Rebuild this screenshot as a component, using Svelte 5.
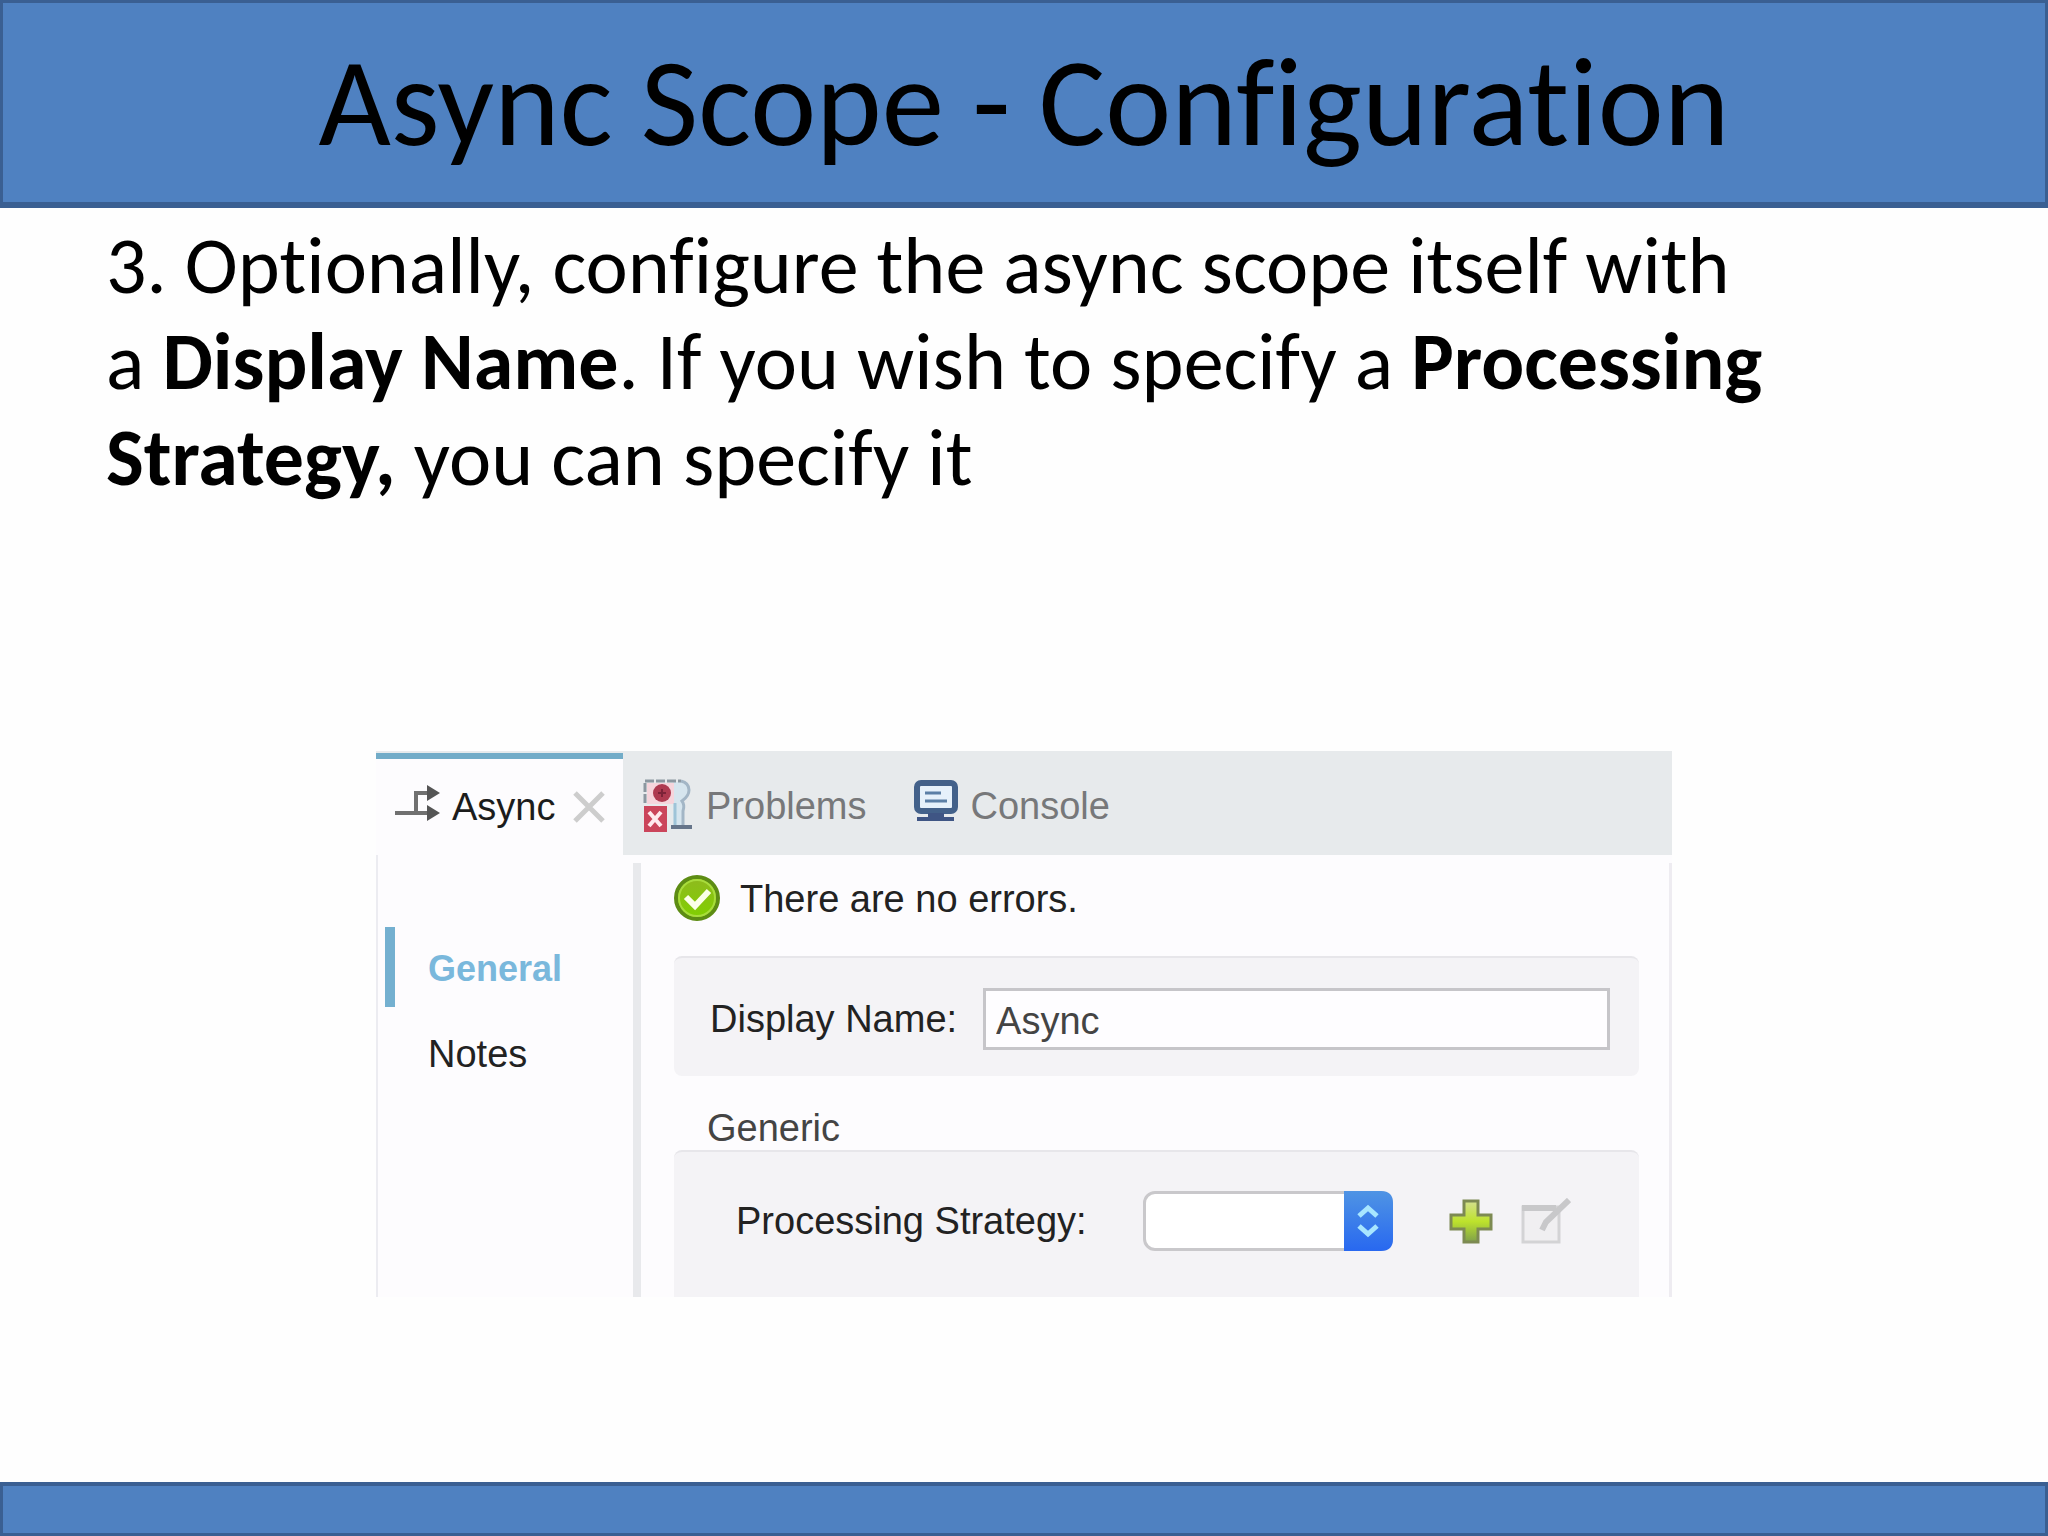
<script>
  const title = "Async Scope - Configuration";
  const pages = ["General", "Notes"];

  let page = $state("General");
  let displayName = $state("Async");
  let strategy = $state("");
</script>

<div class="slide">
  <header>
    <h1>{title}</h1>
  </header>

  <main>
    <p>
      3. Optionally, configure the async scope itself with<br />
      a <b>Display Name</b>. If you wish to specify a <b>Processing</b><br />
      <b>Strategy,</b> you can specify it
    </p>

    <section class="panel">
      <nav class="tabs">
        <div class="tab active">
          <button class="tab-button">
            <svg width="48" height="44" viewBox="0 0 48 44">
              <path d="M1 28H36M22 28V8H34" fill="none" stroke="#707070" stroke-width="4" />
              <path d="M33 0L46 8L33 16ZM33 20L46 28L33 36Z" fill="#555" />
            </svg>
            Async
          </button>
          <button class="close" aria-label="Close">
            <svg width="32" height="32" viewBox="0 0 32 32">
              <path d="M2 2L30 30M30 2L2 30" stroke="#cdcdcd" stroke-width="5" />
            </svg>
          </button>
        </div>
        <button class="tab problems">
          <svg width="50" height="54" viewBox="0 0 50 54">
            <path d="M30 3H38Q45 5 45 11Q45 17 38 22Q41 26 39 32V47H31Z" fill="#d6e5ee" />
            <path d="M2 24V2H38" fill="none" stroke="#8c97a0" stroke-width="3" stroke-dasharray="9 2" />
            <path d="M38 2Q46 4 46 11Q46 17 39 22Q42 26 40 32V46" fill="none" stroke="#a3b6c6" stroke-width="3" />
            <path d="M4 4H31V25H4Z" fill="#f6d5dc" />
            <circle cx="19" cy="14" r="9" fill="#ae3a50" />
            <path d="M15 14H23M19 10V18" stroke="#7c2338" stroke-width="2" />
            <path d="M32 24V46" stroke="#9fc4d8" stroke-width="3" />
            <path d="M28 48H49" stroke="#66758a" stroke-width="4" />
            <path d="M1 27H24V53H1Z" fill="#cb455b" />
            <path d="M6 33L18 47M18 33L6 47" stroke="#ffe9ee" stroke-width="4" />
          </svg>
          Problems
        </button>
        <button class="tab console">
          <svg width="46" height="54" viewBox="0 0 46 54">
            <rect x="4" y="4" width="38" height="28" rx="4" fill="#e6f1fb" stroke="#43618a" stroke-width="6" />
            <path d="M12 14H28M12 22H34" stroke="#5b7fa6" stroke-width="3" />
            <path d="M15 34H31V38H41V42H4V38H15Z" fill="#3f5584" />
          </svg>
          Console
        </button>
      </nav>

      <div class="body">
        <aside>
          {#each pages as name}
            <button class:selected={page === name} onclick={() => (page = name)}>{name}</button>
          {/each}
        </aside>

        <form>
          <div class="status">
            <svg width="48" height="48" viewBox="0 0 48 48">
              <defs>
                <linearGradient id="ok" x1="0" y1="0" x2="0" y2="1">
                  <stop offset="0" stop-color="#8fb91f" />
                  <stop offset="1" stop-color="#80d000" />
                </linearGradient>
              </defs>
              <circle cx="23" cy="23" r="21" fill="url(#ok)" stroke="#5d8c14" stroke-width="4" />
              <circle cx="23" cy="23" r="18" fill="none" stroke="#a8dc3c" stroke-width="2" />
              <path d="M12 22L21 31L35 16" fill="none" stroke="#fbffe8" stroke-width="6" />
            </svg>
            <span>There are no errors.</span>
          </div>

          <div class="group name">
            <label for="display-name">Display Name:</label>
            <input id="display-name" type="text" bind:value={displayName} />
          </div>

          <h2>Generic</h2>
          <div class="group strategy">
            <label for="strategy">Processing Strategy:</label>
            <span class="select">
              <select id="strategy" bind:value={strategy}>
                <option value=""></option>
              </select>
              <svg width="49" height="60" viewBox="0 0 49 60">
                <defs>
                  <linearGradient id="blue" x1="0" y1="0" x2="0" y2="1">
                    <stop offset="0" stop-color="#4f94e4" />
                    <stop offset="1" stop-color="#2868f0" />
                  </linearGradient>
                </defs>
                <path d="M0 0H37Q49 0 49 12V48Q49 60 37 60H0Z" fill="url(#blue)" />
                <path d="M15 25L24 17L33 25M15 35L24 43L33 35" fill="none" stroke="#a8e6ff" stroke-width="5" />
              </svg>
            </span>
            <button type="button" aria-label="Add">
              <svg width="44" height="46" viewBox="0 0 44 46">
                <defs>
                  <linearGradient id="plus" x1="0" y1="0" x2="0" y2="1">
                    <stop offset="0" stop-color="#d4e08e" />
                    <stop offset="0.5" stop-color="#bde22c" />
                    <stop offset="1" stop-color="#7fa04a" />
                  </linearGradient>
                </defs>
                <path d="M15 3H29V17H42V31H29V44H15V31H2V17H15Z" fill="url(#plus)" stroke="#7d8a52" stroke-width="3" />
              </svg>
            </button>
            <button type="button" aria-label="Edit" disabled>
              <svg width="50" height="46" viewBox="0 0 50 46">
                <path d="M2 9H38V44H2Z" fill="#f0eff1" stroke="#d3d3d5" stroke-width="3" />
                <path d="M1 10H35" stroke="#c8c8ca" stroke-width="6" />
                <path d="M48 2L25 24L21 32" fill="none" stroke="#c8c8ca" stroke-width="6" />
              </svg>
            </button>
          </div>
        </form>
      </div>
    </section>
  </main>

  <footer></footer>
</div>

<style>
  :global(body) {
    background: #fefefe;
  }

  .slide {
    display: flex;
    flex-direction: column;
    min-height: 100vh;
    font-family: Carlito, Calibri, Lato, sans-serif;
    font-variant-ligatures: none;
    color: #000;
  }

  header,
  footer {
    box-sizing: border-box;
    background: #4f81c1;
    border: 3px solid #3a5f92;
  }

  header {
    display: flex;
    align-items: center;
    justify-content: center;
    height: 208px;
    border-bottom-width: 6px;
  }

  footer {
    height: 54px;
    margin-top: auto;
    border-top-width: 4px;
  }

  h1 {
    margin: 0;
    font-size: 125px;
    line-height: 132px;
    font-weight: 400;
  }

  p {
    margin: 10px 106px 245px;
    font-size: 80px;
    line-height: 96px;
  }

  .panel {
    margin: 0 376px;
    background: #fdfcfe;
    font-family: "Liberation Sans", Arial, sans-serif;
    font-size: 38px;
    line-height: 40px;
  }

  button {
    padding: 0;
    border: 0;
    background: none;
    color: inherit;
    font: inherit;
  }

  svg {
    display: block;
    flex: none;
  }

  .tabs {
    display: flex;
    height: 104px;
    background: #e7eaec;
  }

  .tab {
    display: flex;
    align-items: center;
    box-sizing: border-box;
    padding-top: 6px;
    color: #77787a;
  }

  .active {
    width: 247px;
    margin-top: 2px;
    padding: 0 18px;
    justify-content: space-between;
    border-top: 6px solid #72acc8;
    background: #fdfcfe;
    color: #1c1c1c;
  }

  .tab-button {
    display: flex;
    align-items: center;
    gap: 10px;
  }

  .problems {
    gap: 13px;
    margin-left: 20px;
  }

  .console {
    gap: 12px;
    margin-left: 46px;
  }

  .body {
    display: flex;
    border-left: 2px solid #ececf1;
  }

  aside {
    display: flex;
    flex-direction: column;
    box-sizing: border-box;
    width: 255px;
    padding: 72px 0 0 7px;
  }

  aside button {
    height: 80px;
    margin-bottom: 5px;
    padding: 4px 0 0 33px;
    border-left: 10px solid transparent;
    text-align: left;
    color: #222;
  }

  aside .selected {
    border-color: #74b0d0;
    color: #7ab8dc;
    font-size: 36px;
    font-weight: 700;
  }

  form {
    flex: 1;
    margin-top: 8px;
    padding: 0 30px 0 33px;
    border-left: 8px solid #e8e9ec;
    border-right: 3px solid #eeecf1;
    color: #222;
  }

  .status {
    display: flex;
    align-items: center;
    gap: 18px;
    height: 48px;
    padding: 12px 0 33px;
  }

  .group {
    display: flex;
    align-items: center;
    box-sizing: border-box;
    border-top: 2px solid #e7e6ea;
    border-radius: 8px;
    background: #f4f3f6;
  }

  .name {
    gap: 26px;
    height: 120px;
    padding: 4px 29px 0 36px;
  }

  input {
    flex: 1;
    box-sizing: border-box;
    min-width: 0;
    height: 62px;
    padding: 4px 10px 0;
    border: 3px solid #c6c5c9;
    background: #fefdff;
    color: #444;
    font: inherit;
  }

  h2 {
    margin: 32px 0 2px 33px;
    font-size: 38px;
    line-height: 40px;
    font-weight: 400;
    color: #444;
  }

  .strategy {
    height: 147px;
    padding: 0 62px 8px;
    border-bottom-left-radius: 0;
    border-bottom-right-radius: 0;
  }

  .select {
    position: relative;
    margin: 0 56px;
  }

  .select svg {
    position: absolute;
    top: 0;
    right: 0;
    pointer-events: none;
  }

  select {
    display: block;
    width: 250px;
    height: 60px;
    border: 3px solid #c9c8cb;
    border-radius: 12px;
    background: #fff;
    appearance: none;
    font: inherit;
  }

  .strategy button + button {
    margin-left: 28px;
  }
</style>
